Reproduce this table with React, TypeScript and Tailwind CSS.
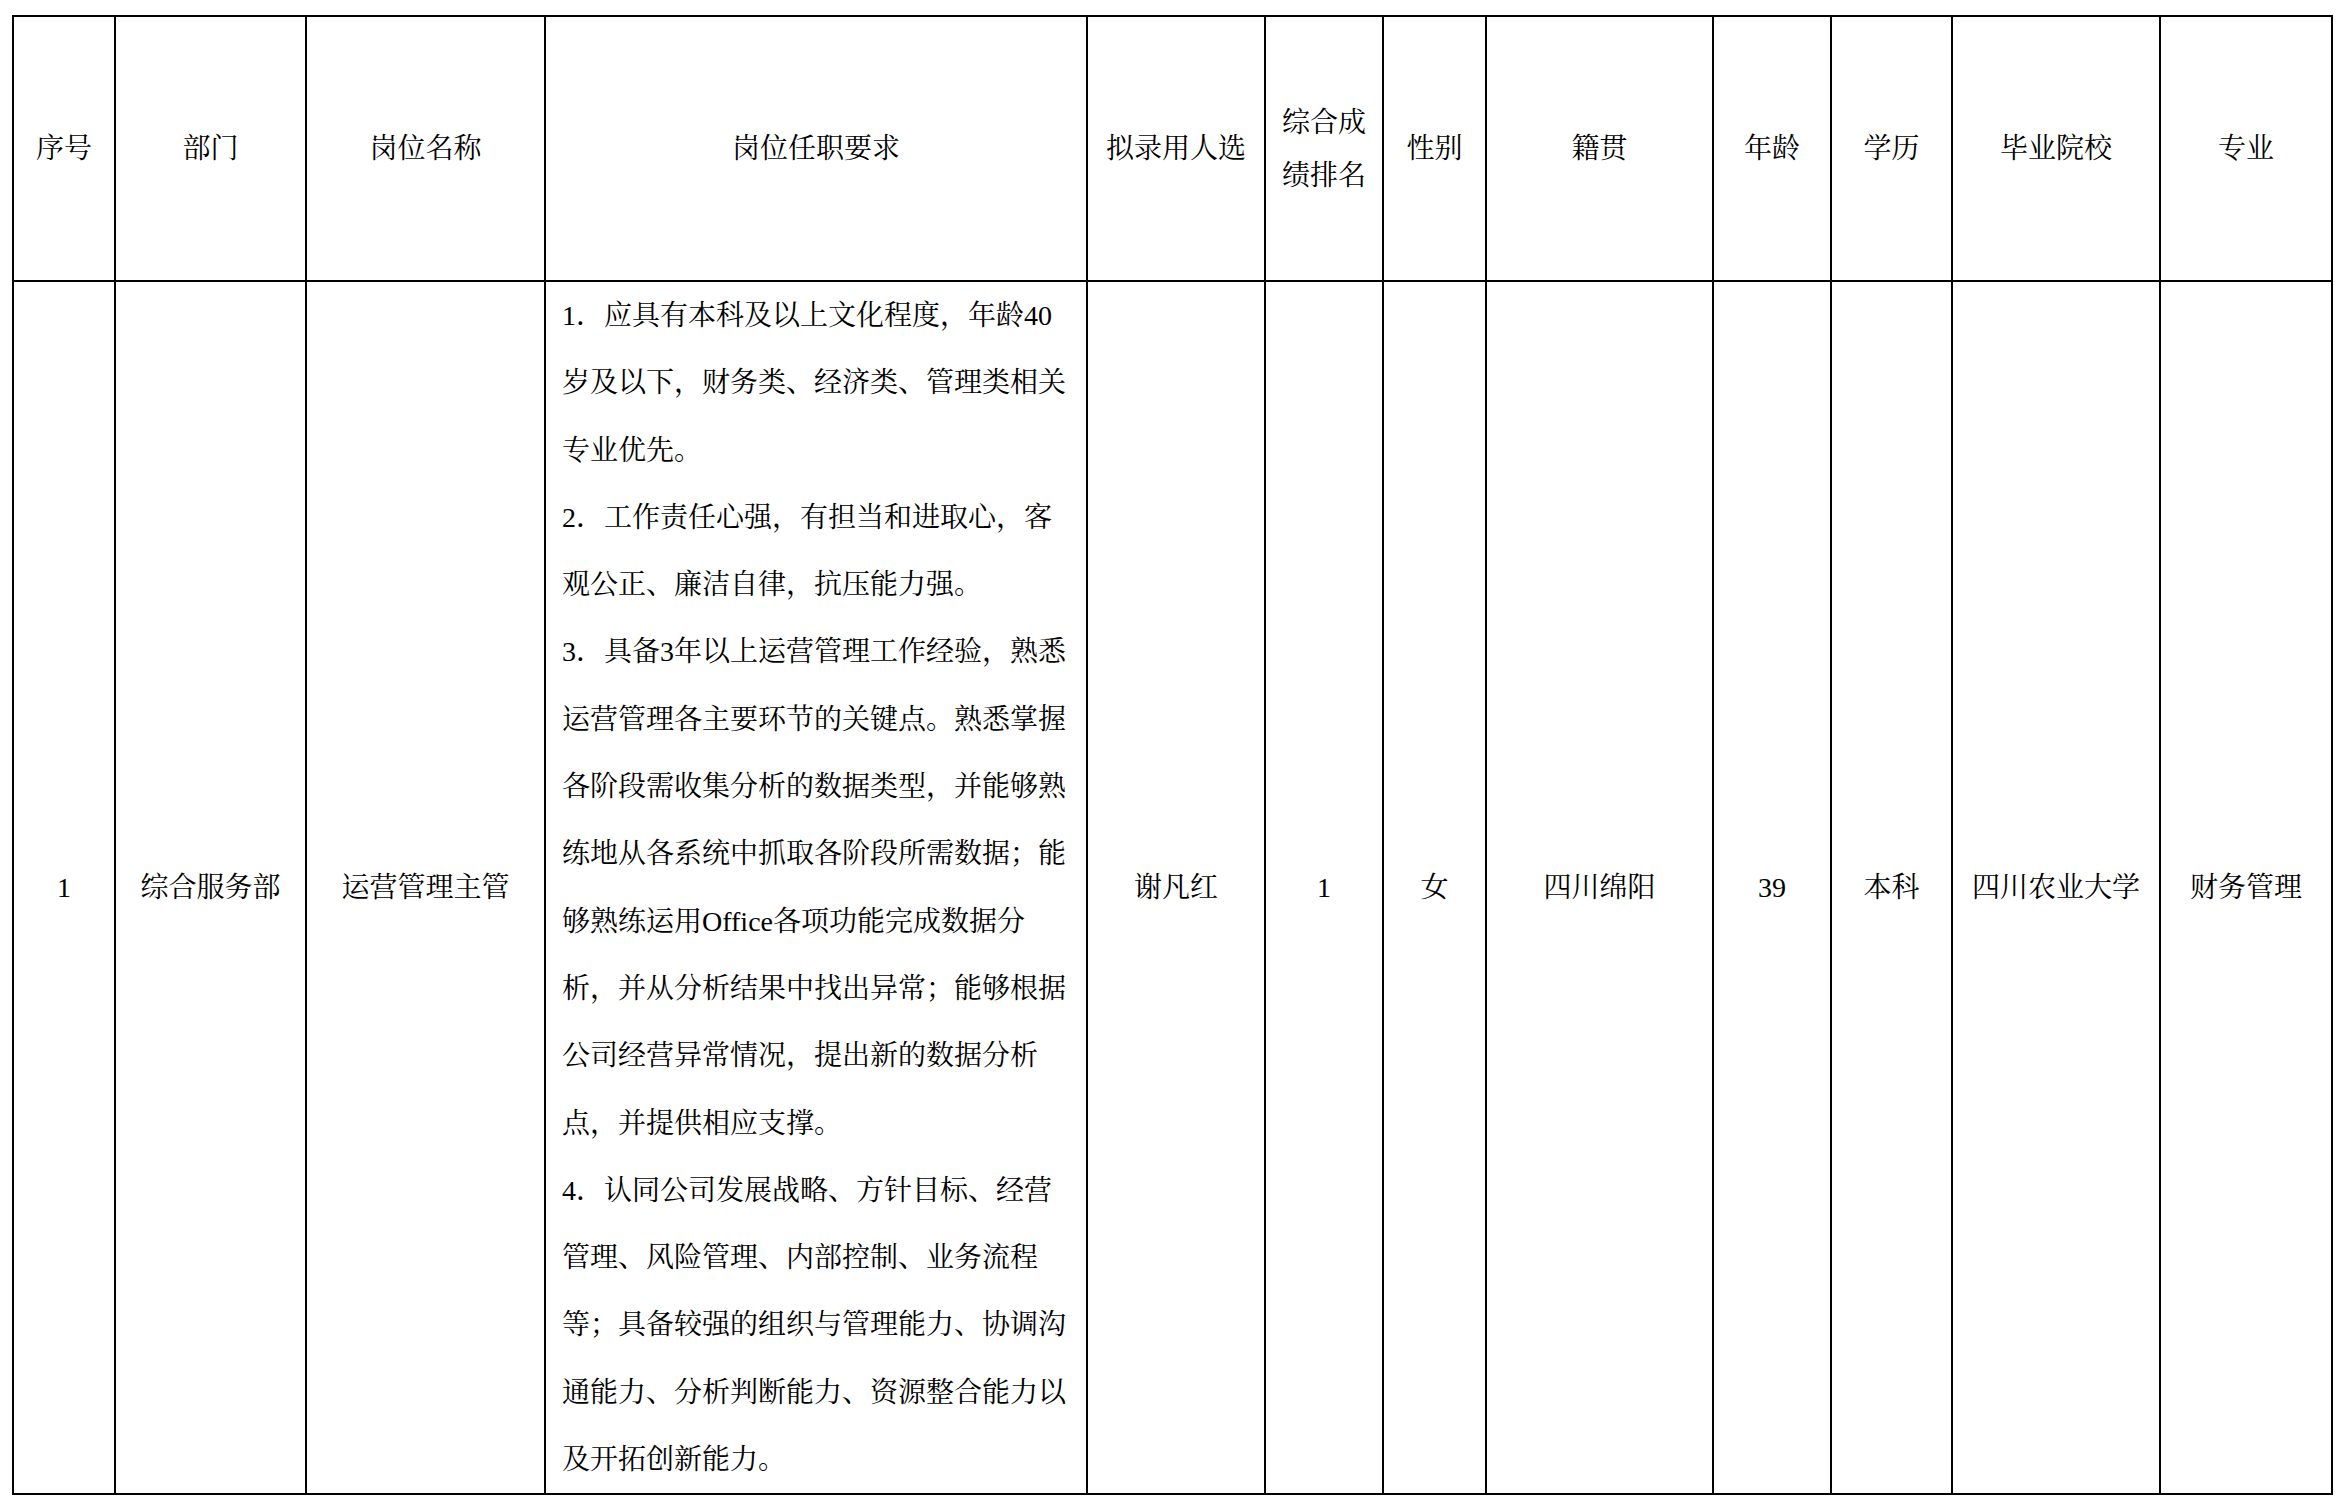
import React from 'react';

// column widths in px, measured from the reference (cell interiors; 2px rules between)
const HEADERS = [
  '序号',
  '部门',
  '岗位名称',
  '岗位任职要求',
  '拟录用人选',
  '综合成绩排名',
  '性别',
  '籍贯',
  '年龄',
  '学历',
  '毕业院校',
  '专业',
];

const REQUIREMENTS = [
  '1．应具有本科及以上文化程度，年龄40岁及以下，财务类、经济类、管理类相关专业优先。',
  '2．工作责任心强，有担当和进取心，客观公正、廉洁自律，抗压能力强。',
  '3．具备3年以上运营管理工作经验，熟悉运营管理各主要环节的关键点。熟悉掌握各阶段需收集分析的数据类型，并能够熟练地从各系统中抓取各阶段所需数据；能够熟练运用Office各项功能完成数据分析，并从分析结果中找出异常；能够根据公司经营异常情况，提出新的数据分析点，并提供相应支撑。',
  '4．认同公司发展战略、方针目标、经营管理、风险管理、内部控制、业务流程等；具备较强的组织与管理能力、协调沟通能力、分析判断能力、资源整合能力以及开拓创新能力。',
];

const ROW = {
  index: '1',
  dept: '综合服务部',
  title: '运营管理主管',
  name: '谢凡红',
  rank: '1',
  gender: '女',
  origin: '四川绵阳',
  age: '39',
  edu: '本科',
  school: '四川农业大学',
  major: '财务管理',
};

const font = "font-['Liberation_Serif','Noto_Serif_CJK_SC','Noto_Sans_CJK_SC',serif]";

function Cell({ children, className = '' }: { children: React.ReactNode; className?: string }) {
  return (
    <div className={`bg-white flex items-center justify-center text-center ${className}`}>
      {children}
    </div>
  );
}

export default function App() {
  return (
    <div className={`min-h-screen bg-white pl-[12px] pt-[15px] text-black text-[28px] ${font}`}>
      <div className="inline-grid bg-black p-[2px] gap-[2px] grid-cols-[100px_189px_237px_540px_176px_116px_101px_225px_116px_119px_206px_170px] grid-rows-[263px_1211px]">
        {HEADERS.map((h) =>
          h === '综合成绩排名' ? (
            <Cell key={h} className="px-[14px] leading-[53px]">
              {h}
            </Cell>
          ) : (
            <Cell key={h} className="px-2 leading-[40px]">
              {h}
            </Cell>
          )
        )}

        <Cell>{ROW.index}</Cell>
        <Cell>{ROW.dept}</Cell>
        <Cell>{ROW.title}</Cell>
        <div className="bg-white pl-[16px] pr-[14px] text-left leading-[67.3px]">
          {REQUIREMENTS.map((r) => (
            <p key={r}>{r}</p>
          ))}
        </div>
        <Cell>{ROW.name}</Cell>
        <Cell>{ROW.rank}</Cell>
        <Cell>{ROW.gender}</Cell>
        <Cell>{ROW.origin}</Cell>
        <Cell>{ROW.age}</Cell>
        <Cell>{ROW.edu}</Cell>
        <Cell>{ROW.school}</Cell>
        <Cell>{ROW.major}</Cell>
      </div>
    </div>
  );
}
